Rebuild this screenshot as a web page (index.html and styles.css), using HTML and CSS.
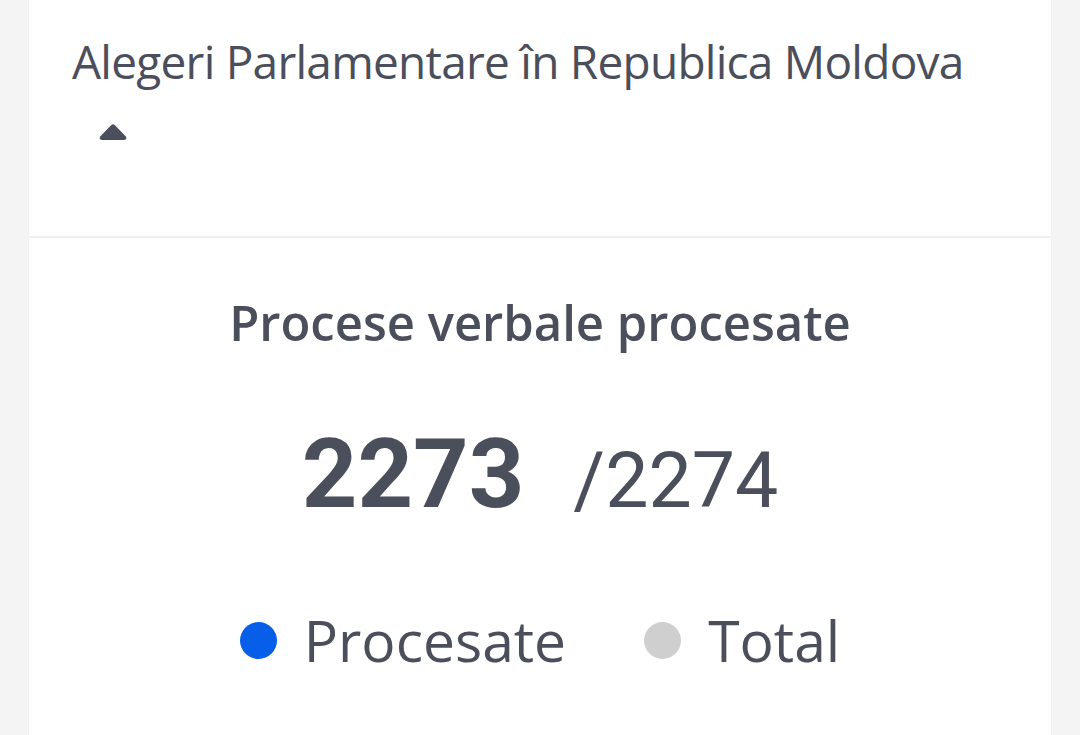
FILE: index.html
```html
<!DOCTYPE html>
<html lang="ro">

<head>
    <meta charset="UTF-8">
    <meta name="viewport" content="width=device-width, initial-scale=1.0">
    <title>Alegeri Parlamentare</title>
    <link rel="stylesheet" href="styles.css">
</head>

<body>
    <div class="card">
        <div class="card-header">
            <h1 class="election-title">Alegeri Parlamentare în Republica Moldova</h1>
            <button class="toggle" aria-label="Restrânge">
                <svg width="28" height="16" viewBox="0 0 28 16">
                    <path d="M12.3 1.1 Q14 -0.4 15.7 1.1 L26.6 12.2 Q28.4 15.6 25 16 L3 16 Q-0.4 15.6 1.4 12.2 Z" fill="#4b4e5b" />
                </svg>
            </button>
        </div>

        <div class="card-body">
            <h2 class="stat-title">Procese verbale procesate</h2>
            <div class="stat-numbers">
                <span class="stat-done">2273</span>
                <span class="stat-total">/2274</span>
            </div>
            <div class="legend">
                <span class="legend-item"><span class="dot dot-blue"></span>Procesate</span>
                <span class="legend-item"><span class="dot dot-gray"></span>Total</span>
            </div>
        </div>
    </div>
</body>

</html>
```

FILE: styles.css
```css
body {
    margin: 0;
    background-color: #f4f4f4;
    font-family: "Open Sans", "Noto Sans", sans-serif;
    color: #4b4e5b;
    height: 735px;
    overflow: hidden;
}

.card {
    margin: 0 29px;
    background-color: white;
    min-height: 735px;
    box-shadow: 0 0 1px rgba(0, 0, 0, 0.08);
}

.card-header {
    padding: 28px 43px 0;
    height: 208px;
    border-bottom: 2px solid #f0f0f0;
}

.election-title {
    margin: 0;
    font-size: 46px;
    font-weight: 400;
    letter-spacing: -0.75px;
    line-height: 66px;
    white-space: nowrap;
}

.toggle {
    display: block;
    margin: 30px 0 0 27px;
    padding: 0;
    border: none;
    background: none;
    line-height: 0;
}

.card-body {
    display: flex;
    flex-direction: column;
    align-items: center;
}

.stat-title {
    margin: 54px 0 0;
    font-size: 49px;
    font-weight: 600;
    letter-spacing: 0;
    line-height: 60px;
}

.stat-numbers {
    display: flex;
    align-items: baseline;
    gap: 49px;
    margin-top: 72px;
    font-family: Roboto, "Liberation Sans", sans-serif;
}

.stat-done {
    font-size: 97px;
    font-weight: 700;
    line-height: 100px;
}

.stat-total {
    font-size: 77px;
    font-weight: 400;
}

.legend {
    display: flex;
    gap: 78px;
    margin-top: 82px;
}

.legend-item {
    display: flex;
    align-items: center;
    gap: 27px;
    font-size: 57px;
    line-height: 64px;
}

.dot {
    width: 37px;
    height: 37px;
    border-radius: 50%;
}

.dot-blue {
    background-color: #075ee9;
}

.dot-gray {
    background-color: #cfcfcf;
}
```
